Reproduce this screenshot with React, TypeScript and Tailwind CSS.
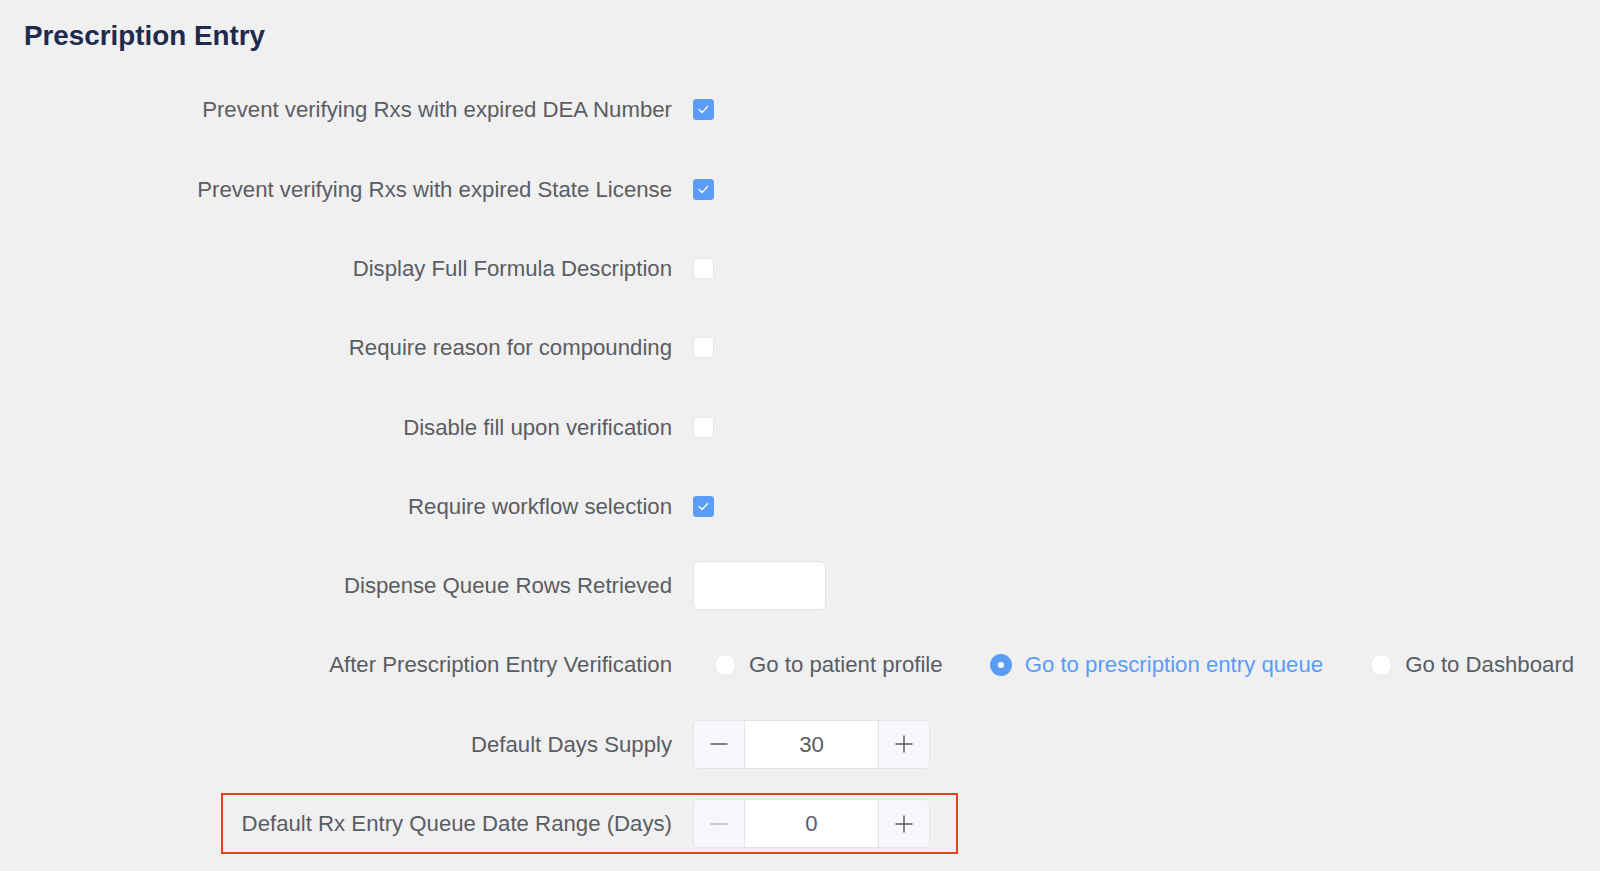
import React from "react";

const font = { fontFamily: '"Liberation Sans", Arial, Helvetica, sans-serif' };

function Checkbox({ checked }: { checked: boolean }) {
  if (checked) {
    return (
      <div className="w-[21px] h-[21px] rounded-[3px] bg-[#5b9cf7] border border-[#5b9cf7] flex items-center justify-center">
        <svg width="21" height="21" viewBox="0 0 21 21" fill="none">
          <polyline points="5.5,10.5 9,13.8 15,7.2" stroke="#ffffff" strokeWidth="1.4" strokeLinecap="round" strokeLinejoin="round" />
        </svg>
      </div>
    );
  }
  return <div className="w-[21px] h-[21px] rounded-[3px] bg-white border border-[#e4e6eb]" />;
}

function Radio({ label, checked }: { label: string; checked?: boolean }) {
  return (
    <div className="flex items-center shrink-0 whitespace-nowrap mr-[47px]">
      {checked ? (
        <div className="w-[22px] h-[22px] shrink-0 rounded-full bg-[#5b9cf7] flex items-center justify-center">
          <div className="w-[6px] h-[6px] rounded-full bg-white" />
        </div>
      ) : (
        <div className="w-[22px] h-[22px] shrink-0 rounded-full bg-white border border-[#e4e6eb]" />
      )}
      <span className={"ml-[13px] whitespace-nowrap " + (checked ? "text-[#5b9cf7]" : "text-[#5a5d63]")}>{label}</span>
    </div>
  );
}

function Minus({ color }: { color: string }) {
  return (
    <svg width="18" height="18" viewBox="0 0 18 18" fill="none">
      <line x1="0.5" y1="9" x2="17.5" y2="9" stroke={color} strokeWidth="1.5" />
    </svg>
  );
}

function Plus({ color }: { color: string }) {
  return (
    <svg width="18" height="18" viewBox="0 0 18 18" fill="none">
      <line x1="0.5" y1="9" x2="17.5" y2="9" stroke={color} strokeWidth="1.5" />
      <line x1="9" y1="0.5" x2="9" y2="17.5" stroke={color} strokeWidth="1.5" />
    </svg>
  );
}

function Stepper({ value, minDisabled }: { value: string; minDisabled?: boolean }) {
  return (
    <div className="flex w-[237px] h-[49px] rounded-[6px] border border-[#e2e4ea] bg-white overflow-hidden">
      <div className="w-[51px] h-full bg-[#f5f7fa] border-r border-[#e2e4ea] flex items-center justify-center">
        <Minus color={minDisabled ? "#b9bcc3" : "#5a5d63"} />
      </div>
      <div className="flex-1 flex items-center justify-center text-[#5a5d63] bg-white">{value}</div>
      <div className="w-[51px] h-full bg-[#f5f7fa] border-l border-[#e2e4ea] flex items-center justify-center">
        <Plus color="#5a5d63" />
      </div>
    </div>
  );
}

function Row({ label, children, offset = 21, extra }: { label: string; children: React.ReactNode; offset?: number; extra?: React.ReactNode }) {
  return (
    <div className="relative flex items-center h-[79.3px]">
      <div className="w-[672px] shrink-0 text-right text-[#5a5d63] whitespace-nowrap">{label}</div>
      <div className={"flex items-center shrink-0 " + (offset === 42 ? "ml-[42px]" : "ml-[21px]")}>{children}</div>
      {extra}
    </div>
  );
}

export default function App() {
  return (
    <div className="w-[1600px] h-[871px] bg-[#f0f0f0] overflow-hidden text-[22.2px]" style={font}>
      <div className="pt-[22px] pl-[24px]">
        <h1 className="text-[27.8px] leading-[27.5px] font-bold text-[#1f2a4c]">Prescription Entry</h1>
      </div>
      <div className="mt-[20.85px]">
        <Row label="Prevent verifying Rxs with expired DEA Number">
          <Checkbox checked />
        </Row>
        <Row label="Prevent verifying Rxs with expired State License">
          <Checkbox checked />
        </Row>
        <Row label="Display Full Formula Description">
          <Checkbox checked={false} />
        </Row>
        <Row label="Require reason for compounding">
          <Checkbox checked={false} />
        </Row>
        <Row label="Disable fill upon verification">
          <Checkbox checked={false} />
        </Row>
        <Row label="Require workflow selection">
          <Checkbox checked />
        </Row>
        <Row label="Dispense Queue Rows Retrieved">
          <div className="w-[133px] h-[49px] rounded-[6px] bg-white border border-[#e2e4ea]" />
        </Row>
        <Row label="After Prescription Entry Verification" offset={42}>
          <Radio label="Go to patient profile" />
          <Radio label="Go to prescription entry queue" checked />
          <Radio label="Go to Dashboard" />
        </Row>
        <Row label="Default Days Supply">
          <Stepper value="30" />
        </Row>
        <Row
          label="Default Rx Entry Queue Date Range (Days)"
          extra={<div className="absolute left-[221px] top-[9px] w-[737px] h-[61px] border-2 border-[#e8401f] pointer-events-none" />}
        >
          <Stepper value="0" minDisabled />
        </Row>
      </div>
    </div>
  );
}
